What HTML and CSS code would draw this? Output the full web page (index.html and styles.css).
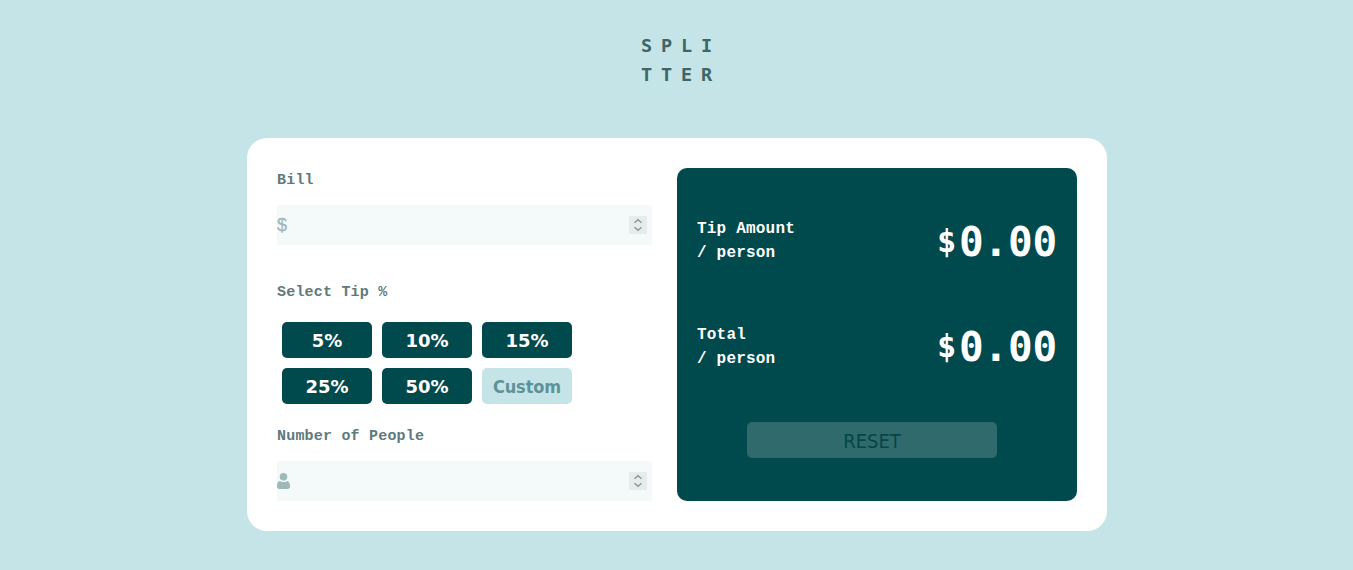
FILE: index.html
```html
<!DOCTYPE html>
<html lang="en">
<head>
<meta charset="utf-8">
<title>Splitter</title>
<link rel="stylesheet" href="styles.css">
</head>
<body>
<h1 class="logo"><span>SPLI</span><span>TTER</span></h1>
<main class="card">
  <section class="form">
    <label class="label" for="bill">Bill</label>
    <div class="field">
      <span class="dollar">$</span>
      <input class="input" id="bill" type="text">
      <svg class="spinner" viewBox="0 0 18 18"><path d="M5.500 6.700 9 3.700l3.500 3M5.500 11.300 9 14.300l3.500-3"/></svg>
    </div>
    <div class="label label-tip">Select Tip %</div>
    <div class="tips">
      <button class="tip">5%</button>
      <button class="tip">10%</button>
      <button class="tip">15%</button>
      <button class="tip">25%</button>
      <button class="tip">50%</button>
      <button class="tip custom">Custom</button>
    </div>
    <label class="label label-people" for="people">Number of People</label>
    <div class="field">
      <svg class="person" viewBox="0 0 13 16"><path d="M3 7.900C4 8.700 5.200 9.100 6.500 9.100S9 8.700 10 7.900C12 8.200 13 10.400 13 12.600v1C13 15 12.200 16 10.700 16H2.300C.8 16 0 15 0 13.600v-1C0 10.400 1 8.200 3 7.900z"/><circle cx="6.500" cy="3.800" r="3.800"/></svg>
      <input class="input" id="people" type="text">
      <svg class="spinner" viewBox="0 0 18 18"><path d="M5.500 6.700 9 3.700l3.500 3M5.500 11.300 9 14.300l3.500-3"/></svg>
    </div>
  </section>
  <section class="result">
    <div class="row">
      <div class="caption">Tip Amount<br>/ person</div>
      <div class="amount"><span class="sign">$</span>0.00</div>
    </div>
    <div class="row">
      <div class="caption">Total<br>/ person</div>
      <div class="amount amount-total"><span class="sign">$</span>0.00</div>
    </div>
    <button class="reset">RESET</button>
  </section>
</main>
</body>
</html>
```
FILE: styles.css
```css
* { box-sizing: border-box; }
body {
  margin: 0;
  min-height: 570px;
  background: #c5e4e7;
  font-family: "Liberation Mono", monospace;
  font-weight: 700;
}
.logo {
  display: flex;
  flex-direction: column;
  align-items: center;
  margin: 0;
  padding: 31px 0 49px 9px;
  font-family: "DejaVu Sans Mono", monospace;
  font-size: 18.500px;
  line-height: 29px;
  letter-spacing: 8.860px;
  color: #3d6666;
}
.card {
  display: flex;
  gap: 25px;
  width: 860px;
  height: 393px;
  margin: 0 auto 0 247px;
  padding: 30px;
  border-radius: 20px;
  background: #fff;
}
.form { width: 375px; }
.label {
  display: block;
  height: 37px;
  padding-top: 1px;
  font-size: 15px;
  line-height: 24px;
  letter-spacing: .2px;
  color: #5e7a7d;
}
.label-tip { margin-top: 35px; }
.label-people { margin-top: 20px; }
.field {
  display: flex;
  align-items: center;
  height: 40px;
  padding-right: 5px;
  background: #f4fafa;
}
.dollar {
  width: 13px;
  font-family: "Liberation Sans", sans-serif;
  font-size: 18px;
  font-weight: 400;
  line-height: 24px;
  color: #9fb9b8;
  -webkit-text-stroke: .3px #9fb9b8;
}
.person { width: 13px; height: 16px; fill: #9fb9b8; }
.input {
  flex: 1;
  min-width: 0;
  height: 40px;
  border: 0;
  background: transparent;
  font: inherit;
}
.spinner {
  width: 18px;
  height: 18px;
  background: #e8eaec;
  fill: none;
  stroke: #7d9b98;
  stroke-width: 1.4;
}
.tips {
  display: grid;
  grid-template-columns: repeat(3, 90px);
  gap: 10px;
  margin-top: 5px;
  padding-left: 5px;
}
.tip {
  height: 36px;
  padding: 0;
  border: 0;
  border-radius: 5px;
  background: #00494d;
  color: #fff;
  font-family: "DejaVu Sans", sans-serif;
  font-size: 18px;
  font-weight: 700;
  letter-spacing: -.1px;
}
.custom {
  background: #c5e4e7;
  color: #5e9299;
  font-family: "DejaVu Sans Condensed", "DejaVu Sans", sans-serif;
  font-stretch: condensed;
}
.result {
  width: 400px;
  height: 333px;
  padding: 49px 20px 0;
  border-radius: 10px;
  background: #00494d;
  color: #fff;
}
.row {
  display: flex;
  justify-content: space-between;
  height: 106px;
}
.caption {
  font-size: 16px;
  line-height: 24px;
  letter-spacing: .2px;
}
.amount {
  display: flex;
  font-family: "DejaVu Sans Mono", monospace;
  font-size: 41px;
  line-height: 50px;
  letter-spacing: -.200px;
}
.amount-total { margin-top: -1px; }
.sign { width: 22px; font-size: 32px; line-height: 48px; letter-spacing: 0; }
.reset {
  display: block;
  width: 250px;
  height: 36px;
  margin: -7px auto 0 50px;
  padding: 2px 0 0;
  border: 0;
  border-radius: 5px;
  background: #306a6d;
  color: #04464a;
  font-family: "DejaVu Sans Condensed", "DejaVu Sans", sans-serif;
  font-stretch: condensed;
  font-size: 20px;
}
```
